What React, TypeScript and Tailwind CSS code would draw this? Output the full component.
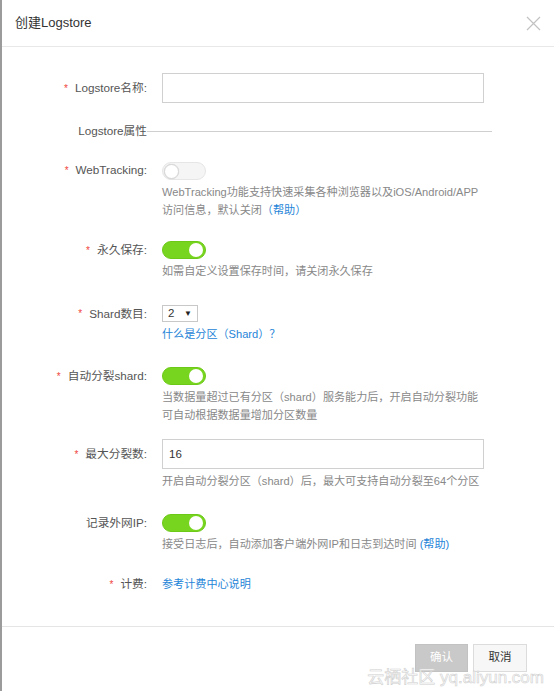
import React from 'react';

const FONT = "font-['Liberation_Sans','Noto_Sans_CJK_SC',sans-serif]";

function Toggle({ on }: { on: boolean }) {
  if (on) {
    return (
      <div className="w-[44px] h-[18px] rounded-full bg-[#78d51f] border border-[#6cc917] flex items-center justify-end pr-[2px]">
        <div className="w-[14px] h-[14px] rounded-full bg-white" />
      </div>
    );
  }
  return (
    <div className="w-[44px] h-[18px] rounded-full bg-[#f5f5f5] border border-[#e6e6e6] flex items-center pl-[1px]">
      <div className="w-[15px] h-[15px] rounded-full bg-white border border-[#d6d6d6] shadow-[0_0_1px_rgba(0,0,0,0.15)]" />
    </div>
  );
}

function Row({
  label,
  required,
  h,
  className,
  children,
}: {
  label: string;
  required?: boolean;
  h: string;
  className?: string;
  children: React.ReactNode;
}) {
  return (
    <div className={`flex items-start ${className ?? ''}`}>
      <div className={`w-[147px] shrink-0 flex items-center justify-end text-[11.7px] text-[#555] ${h}`}>
        {required && <span className="text-[#f0463c] mr-[7px] text-[10px]">*</span>}
        <span>{label}</span>
      </div>
      <div className="ml-[15px] flex flex-col">{children}</div>
    </div>
  );
}

function Desc({ children }: { children: React.ReactNode }) {
  return <div className="mt-[3px] text-[11.1px] leading-[18px] text-[#888] whitespace-nowrap">{children}</div>;
}

export default function App() {
  return (
    <div className={`relative w-[554px] h-[691px] bg-white overflow-hidden ${FONT}`}>
      {/* left edge of the screen behind */}
      <div className="absolute left-0 top-0 bottom-0 w-[2px] bg-[#9b9b9b]" />

      {/* Header */}
      <div className="h-[47px] border-b border-[#e8e8e8] flex items-center justify-between pl-[15px] pr-[13px]">
        <span className="text-[13px] text-[#333]">创建Logstore</span>
        <svg width="15" height="15" viewBox="0 0 15 15" className="text-[#c2c2c2]">
          <path d="M1 1L14 14M14 1L1 14" stroke="currentColor" strokeWidth="1.2" />
        </svg>
      </div>

      {/* Body */}
      <div className="h-[579px] pt-[26px]">
        <Row label="Logstore名称:" required h="h-[30px]">
          <input className="w-[322px] h-[30px] border border-[#d0d0d0] outline-none px-[6px] text-[11px]" />
        </Row>

        <div className="mt-[19px] flex items-center h-[18px]">
          <span className="w-[147px] shrink-0 text-right text-[11.7px] text-[#555]">Logstore属性</span>
          <div className="w-[345px] h-px bg-[#cfcfcf]" />
        </div>

        <Row label="WebTracking:" required h="h-[16px]" className="mt-[22px]">
          <Toggle on={false} />
          <Desc>
            <div>WebTracking功能支持快速采集各种浏览器以及iOS/Android/APP</div>
            <div>
              访问信息，默认关闭<span className="text-[#1f85d8]">（帮助）</span>
            </div>
          </Desc>
        </Row>

        <Row label="永久保存:" required h="h-[18px]" className="mt-[22px]">
          <Toggle on />
          <Desc>如需自定义设置保存时间，请关闭永久保存</Desc>
        </Row>

        <Row label="Shard数目:" required h="h-[17px]" className="mt-[25px]">
          <div className="w-[36px] h-[17px] border border-[#c8c8c8] flex items-center justify-between px-[5px] text-[11.5px] text-[#333]">
            <span>2</span>
            <span className="text-[8px] text-[#222]">▼</span>
          </div>
          <div className="mt-[3px] text-[11.1px] leading-[18px] text-[#1f85d8]">什么是分区（Shard）？</div>
        </Row>

        <Row label="自动分裂shard:" required h="h-[18px]" className="mt-[24px]">
          <Toggle on />
          <Desc>
            <div>当数据量超过已有分区（shard）服务能力后，开启自动分裂功能</div>
            <div>可自动根据数据量增加分区数量</div>
          </Desc>
        </Row>

        <Row label="最大分裂数:" required h="h-[30px]" className="mt-[15px]">
          <input
            defaultValue="16"
            className="w-[322px] h-[30px] border border-[#d0d0d0] outline-none px-[6px] text-[11.5px] text-[#333]"
          />
          <Desc>开启自动分裂分区（shard）后，最大可支持自动分裂至64个分区</Desc>
        </Row>

        <Row label="记录外网IP:" h="h-[18px]" className="mt-[24px]">
          <Toggle on />
          <Desc>
            接受日志后，自动添加客户端外网IP和日志到达时间 <span className="text-[#1f85d8]">(帮助)</span>
          </Desc>
        </Row>

        <Row label="计费:" required h="h-[18px]" className="mt-[22px]">
          <div className="text-[11.1px] leading-[18px] text-[#1f85d8]">参考计费中心说明</div>
        </Row>
      </div>

      {/* Footer */}
      <div className="border-t border-[#e5e5e5] flex justify-end gap-[5px] pt-[17px] pr-[27px]">
        <button className="w-[53px] h-[28px] bg-[#c9c9c9] border border-[#c2c2c2] text-white text-[11.5px]">确认</button>
        <button className="w-[54px] h-[28px] bg-[#f7f7f7] border border-[#dcdcdc] text-[#333] text-[11.5px]">取消</button>
      </div>

      {/* watermark */}
      <div className="absolute right-[10px] bottom-[2px] text-[17px] leading-[22px] text-white/90 [-webkit-text-stroke:0.6px_#cfcfcf] pointer-events-none">
        云栖社区 yq.aliyun.com
      </div>
    </div>
  );
}
